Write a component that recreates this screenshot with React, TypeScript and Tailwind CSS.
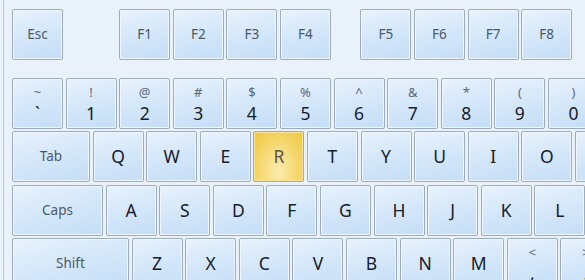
import React from "react";

type KeyProps = {
  w?: string;
  label?: string;
  top?: string;
  bottom?: string;
  letter?: string;
  active?: boolean;
  className?: string;
};

function Key({ w = "w-[51px]", label, top, bottom, letter, active, className = "" }: KeyProps) {
  const face = active
    ? "border-[#c9a84e] bg-[radial-gradient(ellipse_at_50%_80%,#fbecb0_0%,#f6d973_50%,#efc53d_100%)] shadow-[inset_0_0_0_1px_#f9e49a]"
    : "border-[#9eabb8] bg-[linear-gradient(165deg,#e8f2fc_0%,#d6e8fa_45%,#c4ddf6_100%)] shadow-[inset_0_0_0_1px_#eef6fe]";
  return (
    <div
      className={`${w} h-[51px] shrink-0 border rounded-[2px] flex flex-col items-center justify-center ${face} ${className}`}
    >
      {label && <span className="text-[13.5px] text-[#4a5968]">{label}</span>}
      {letter && (
        <span className={`text-[17.5px] ${active ? "text-[#5e5640]" : "text-[#16202b]"}`}>{letter}</span>
      )}
      {top !== undefined && (
        <>
          <span className="text-[13px] leading-[15px] text-[#5b6977] mt-[2px]">{top}</span>
          <span className="text-[17.5px] leading-[22px] text-[#16202b] mt-[2px]">{bottom}</span>
        </>
      )}
    </div>
  );
}

const numbers: [string, string][] = [
  ["!", "1"],
  ["@", "2"],
  ["#", "3"],
  ["$", "4"],
  ["%", "5"],
  ["^", "6"],
  ["&", "7"],
  ["*", "8"],
  ["(", "9"],
  [")", "0"],
];

export default function App() {
  return (
    <div
      className="w-[585px] h-[280px] overflow-hidden bg-[#e9f1fb] pl-[3px]"
      style={{ fontFamily: '"Noto Sans", "Open Sans", sans-serif' }}
    >
      <div className="h-full border-l border-[#bcc7d2] pl-[8px] pt-[9px] flex flex-col">
        {/* Function row */}
        <div className="flex gap-[2.6px]">
          <Key label="Esc" />
          <Key label="F1" className="ml-[53.6px]" />
          <Key label="F2" />
          <Key label="F3" />
          <Key label="F4" />
          <Key label="F5" className="ml-[26.8px]" />
          <Key label="F6" />
          <Key label="F7" />
          <Key label="F8" />
        </div>

        {/* Number row */}
        <div className="flex gap-[2.6px] mt-[17.5px]">
          <Key top="~" bottom="`" />
          {numbers.map(([t, b]) => (
            <Key key={b} top={t} bottom={b} />
          ))}
        </div>

        {/* QWERTY */}
        <div className="flex gap-[2.6px] mt-[2.5px]">
          <Key w="w-[78px]" label="Tab" />
          {"QWERTYUIO".split("").map((c) => (
            <Key key={c} letter={c} active={c === "R"} />
          ))}
          <Key />
        </div>

        {/* Home row */}
        <div className="flex gap-[2.6px] mt-[2.5px]">
          <Key w="w-[91px]" label="Caps" />
          {"ASDFGHJKL".split("").map((c) => (
            <Key key={c} letter={c} />
          ))}
        </div>

        {/* Bottom row */}
        <div className="flex gap-[2.6px] mt-[2.5px]">
          <Key w="w-[117px]" label="Shift" />
          {"ZXCVBNM".split("").map((c) => (
            <Key key={c} letter={c} />
          ))}
          <Key top="<" bottom="," />
          <Key top=">" bottom="." />
        </div>
      </div>
    </div>
  );
}
